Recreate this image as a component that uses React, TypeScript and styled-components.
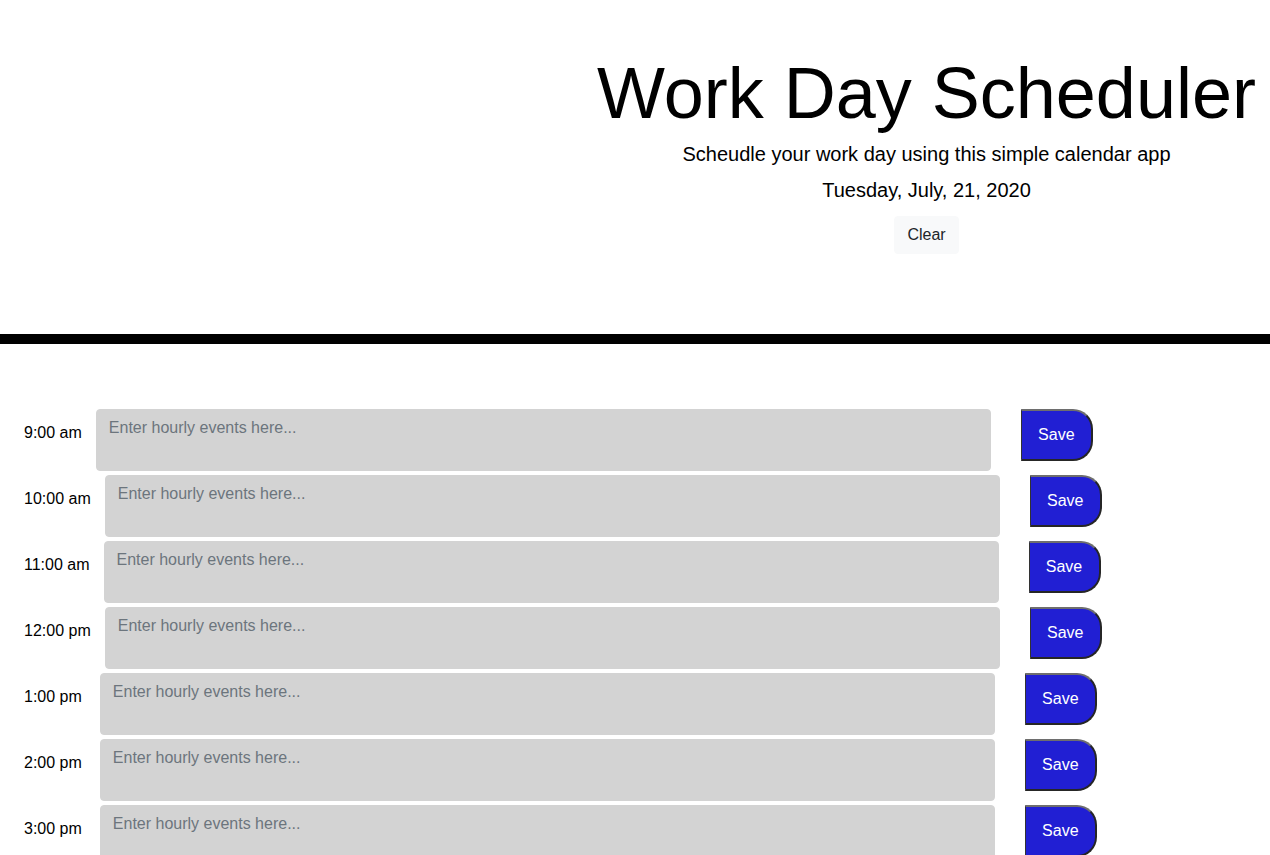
import styled, { createGlobalStyle } from "styled-components";

type Slot = {
  label: string;
  offset: number;
};

const slots: Slot[] = [
  { label: "9:00 am", offset: 0 },
  { label: "10:00 am", offset: 0 },
  { label: "11:00 am", offset: 0 },
  { label: "12:00 pm", offset: 0 },
  { label: "1:00 pm", offset: 4 },
  { label: "2:00 pm", offset: 4 },
  { label: "3:00 pm", offset: 4 },
  { label: "4:00 pm", offset: 4 },
  { label: "5:00 pm", offset: 4 },
];

const GlobalStyle = createGlobalStyle`
  html {
    scrollbar-width: none;
  }

  html::-webkit-scrollbar {
    display: none;
  }

  body {
    margin: 0;
    font-family: "Liberation Sans", Arial, sans-serif;
    color: #212529;
    background: #fff;
  }
`;

export default function App() {
  return (
    <>
      <GlobalStyle />
      <Header>
        <Title>Work Day Scheduler</Title>
        <Lead>Scheudle your work day using this simple calendar app</Lead>
        <Lead>Tuesday, July, 21, 2020</Lead>
        <ClearButton type="button">Clear</ClearButton>
      </Header>
      <Divider />
      <Schedule>
        {slots.map((slot) => (
          <Row key={slot.label}>
            <Hour $offset={slot.offset}>{slot.label}</Hour>
            <EventInput placeholder="Enter hourly events here..." />
            <SaveButton type="button">Save</SaveButton>
          </Row>
        ))}
      </Schedule>
    </>
  );
}

const Header = styled.header`
  display: flex;
  flex-direction: column;
  align-items: center;
  padding: 50px 0 80px 583px;
`;

const Title = styled.h1`
  margin: 0 0 3px;
  font-size: 72px;
  font-weight: 400;
  line-height: 1.2;
  color: #000;
`;

const Lead = styled.p`
  margin: 0 0 6px;
  font-size: 20px;
  line-height: 30px;
  color: #000;

  & + & {
    margin-bottom: 11px;
  }
`;

const ClearButton = styled.button`
  padding: 6px 12px;
  font-family: inherit;
  font-size: 16px;
  line-height: 24px;
  color: #212529;
  background: #f8f9fa;
  border: 1px solid #f8f9fa;
  border-radius: 4px;
`;

const Divider = styled.hr`
  margin: 0;
  height: 10px;
  border: none;
  background: #000;
`;

const Schedule = styled.main`
  display: flex;
  flex-direction: column;
  gap: 4px;
  padding-top: 65px;
`;

const Row = styled.div`
  display: flex;
  align-items: flex-start;
`;

const Hour = styled.div<{ $offset: number }>`
  padding: 12px 0 0 24px;
  margin-right: ${(p) => 14 + p.$offset}px;
  font-size: 16px;
  line-height: 24px;
  color: #000;
`;

const EventInput = styled.textarea`
  box-sizing: border-box;
  width: 895px;
  height: 62px;
  padding: 6px 12px;
  font-family: inherit;
  font-size: 16px;
  line-height: 24px;
  color: #495057;
  background: #d3d3d3;
  border: 1px solid #d3d3d3;
  border-radius: 4px;
  resize: none;

  &::placeholder {
    color: #6c757d;
  }
`;

const SaveButton = styled.button`
  box-sizing: border-box;
  width: 72px;
  height: 52px;
  margin-left: 30px;
  padding: 0;
  font-family: inherit;
  font-size: 16px;
  color: #fff;
  background: rgb(33, 31, 211);
  border-style: solid;
  border-width: 2px 2px 2px 1px;
  border-color: #6e6e6e #262626 #262626 #333;
  border-radius: 0 20px 20px 0;
`;
